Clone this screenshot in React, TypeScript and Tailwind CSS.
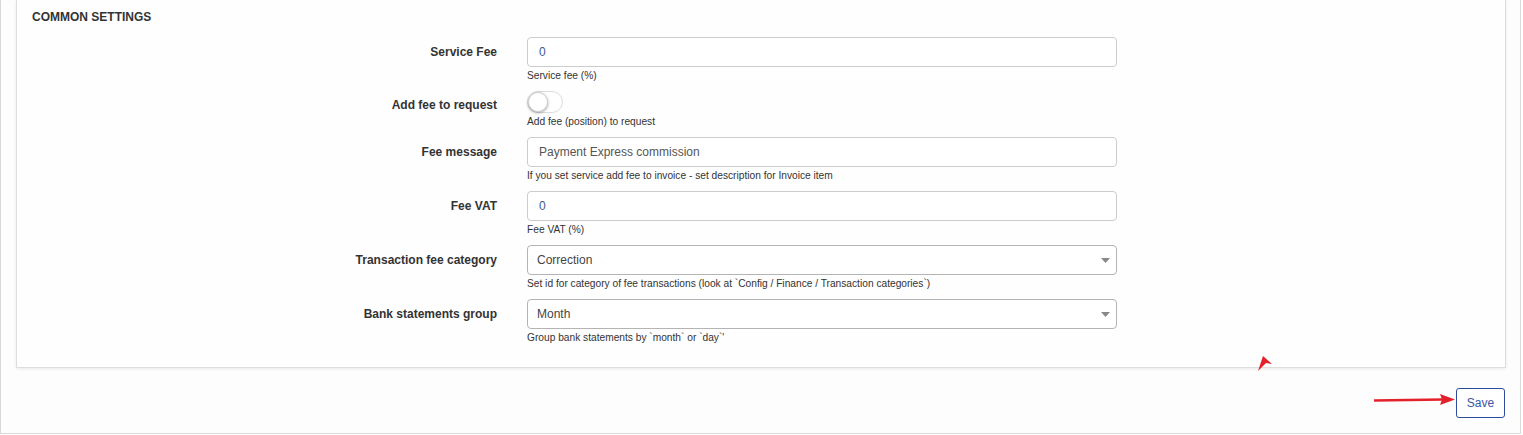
const font = { fontFamily: '"Liberation Sans", Arial, sans-serif' };

type Row = {
  label: string;
  kind: "input" | "toggle" | "select";
  value?: string;
  valueColor?: string;
  help: string;
};

const rows: Row[] = [
  { label: "Service Fee", kind: "input", value: "0", valueColor: "text-[#3d5a8c]", help: "Service fee (%)" },
  { label: "Add fee to request", kind: "toggle", help: "Add fee (position) to request" },
  {
    label: "Fee message",
    kind: "input",
    value: "Payment Express commission",
    valueColor: "text-[#555555]",
    help: "If you set service add fee to invoice - set description for Invoice item",
  },
  { label: "Fee VAT", kind: "input", value: "0", valueColor: "text-[#3d5a8c]", help: "Fee VAT (%)" },
  {
    label: "Transaction fee category",
    kind: "select",
    value: "Correction",
    help: "Set id for category of fee transactions (look at `Config / Finance / Transaction categories`)",
  },
  { label: "Bank statements group", kind: "select", value: "Month", help: "Group bank statements by `month` or `day`'" },
];

function Control({ row }: { row: Row }) {
  if (row.kind === "toggle") {
    return (
      <div className="h-[22px] w-[36px] rounded-full border border-[#dcdcdc] bg-white relative">
        <div className="absolute left-0 top-0 h-[20px] w-[20px] rounded-full bg-white border border-[#d0d0d0] shadow-[0_1px_3px_rgba(0,0,0,0.35)]" />
      </div>
    );
  }
  if (row.kind === "select") {
    return (
      <div className="h-[30px] w-[590px] rounded-[4px] border border-[#b4b4b4] bg-white flex items-center justify-between pl-[9px] pr-[6px]">
        <span className="text-[12px] text-[#444444]">{row.value}</span>
        <svg width="9" height="5" viewBox="0 0 9 5">
          <polygon points="0,0 9,0 4.5,5" fill="#888888" />
        </svg>
      </div>
    );
  }
  return (
    <div className="h-[30px] w-[590px] rounded-[4px] border border-[#cccccc] bg-white flex items-center pl-[11px]">
      <span className={`text-[12px] ${row.valueColor}`}>{row.value}</span>
    </div>
  );
}

export default function App() {
  return (
    <div
      className="relative w-[1521px] h-[434px] border-l border-r border-b border-[#d9d9d9] bg-[#fdfdfd] flex flex-col"
      style={font}
    >
      {/* Settings panel */}
      <div className="ml-[15px] mr-[14px] border-l border-r border-b border-[#dddddd] bg-[#fefefe] shadow-[0_1px_3px_rgba(0,0,0,0.08)] pt-2 pb-[14px]">
        <div className="pl-[15px] h-[18px] leading-[18px] text-[12px] font-bold text-[#333333] uppercase mb-[11px]">
          Common settings
        </div>

        {rows.map((row) => (
          <div key={row.label} className="grid grid-cols-[480px_590px] gap-x-[30px] mb-[8px]">
            <div
              className={`flex justify-end items-center text-[12px] font-bold text-[#333333] ${
                row.kind === "toggle" ? "h-[22px] pt-[6px]" : "h-[30px]"
              }`}
            >
              {row.label}
            </div>
            <div className="flex flex-col">
              <Control row={row} />
              <div className="mt-[2px] h-[14px] leading-[14px] text-[10.2px] text-[#333333] whitespace-nowrap">
                {row.help}
              </div>
            </div>
          </div>
        ))}
      </div>

      {/* Footer */}
      <div className="flex justify-end mr-[15px] mt-5">
        <button className="h-[30px] w-[49px] rounded-[3px] border border-[#2f4b9e] bg-white text-[12px] text-[#3a55a8]">
          Save
        </button>
      </div>

      {/* Annotations */}
      <svg className="absolute left-0 top-0 pointer-events-none" width="1521" height="434">
        <polygon points="1262,356 1271,364 1265,363 1257,371" fill="#e3212b" />
        <line x1="1373" y1="400.5" x2="1442" y2="399.5" stroke="#e3212b" strokeWidth="2.5" />
        <polygon points="1454,399.5 1439,394 1441,399.5 1439,405" fill="#e3212b" />
      </svg>
    </div>
  );
}
